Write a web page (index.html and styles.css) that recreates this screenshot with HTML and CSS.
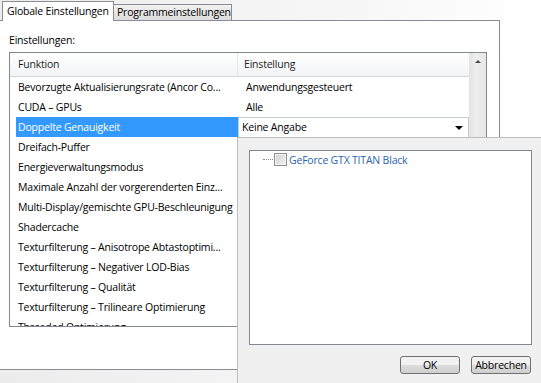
FILE: index.html
```html
<!DOCTYPE html>
<html lang="de">
<head>
    <meta charset="UTF-8">
    <title>Globale Einstellungen</title>
    <link rel="stylesheet" href="styles.css">
</head>
<body>
    <div class="dialog">
        <!-- Reiter oben -->
        <div class="tabs">
            <div class="tab aktiv">Globale Einstellungen</div>
            <div class="tab">Programmeinstellungen</div>
        </div>

        <div class="seite">
            <div class="beschriftung">Einstellungen:</div>
            <div class="liste">
                <div class="inhalt">
                    <div class="kopf">
                        <div class="k-funktion">Funktion</div>
                        <div class="k-wert">Einstellung</div>
                    </div>
                    <div class="zeile"><div class="fn">Bevorzugte Aktualisierungsrate (Ancor Co...</div><div class="wert">Anwendungsgesteuert</div></div>
                    <div class="zeile"><div class="fn">CUDA – GPUs</div><div class="wert">Alle</div></div>
                    <div class="zeile gewaehlt">
                        <div class="fn">Doppelte Genauigkeit</div>
                        <div class="wert combo">Keine Angabe<span class="pfeil"></span></div>
                    </div>
                    <div class="zeile"><div class="fn">Dreifach-Puffer</div><div class="wert"></div></div>
                    <div class="zeile"><div class="fn">Energieverwaltungsmodus</div><div class="wert"></div></div>
                    <div class="zeile"><div class="fn">Maximale Anzahl der vorgerenderten Einz...</div><div class="wert"></div></div>
                    <div class="zeile"><div class="fn">Multi-Display/gemischte GPU-Beschleunigung</div><div class="wert"></div></div>
                    <div class="zeile"><div class="fn">Shadercache</div><div class="wert"></div></div>
                    <div class="zeile"><div class="fn">Texturfilterung – Anisotrope Abtastoptimi...</div><div class="wert"></div></div>
                    <div class="zeile"><div class="fn">Texturfilterung – Negativer LOD-Bias</div><div class="wert"></div></div>
                    <div class="zeile"><div class="fn">Texturfilterung – Qualität</div><div class="wert"></div></div>
                    <div class="zeile"><div class="fn">Texturfilterung – Trilineare Optimierung</div><div class="wert"></div></div>
                    <div class="zeile"><div class="fn">Threaded Optimierung</div><div class="wert"></div></div>
                </div>
                <div class="rollbalken">
                    <div class="hoch"><span class="dreieck"></span></div>
                </div>
            </div>
        </div>

        <!-- aufgeklappte Auswahl über der Liste -->
        <div class="auswahl">
            <div class="baum">
                <div class="knoten">
                    <span class="linie"></span>
                    <span class="haken"></span>
                    <span class="gpu">GeForce GTX TITAN Black</span>
                </div>
            </div>
            <div class="knoepfe">
                <button class="knopf">OK</button>
                <button class="knopf">Abbrechen</button>
            </div>
        </div>
    </div>
</body>
</html>
```

FILE: styles.css
```css
*{
    margin: 0;
    padding: 0;
    box-sizing: border-box;
}
body{
    font-family: "Open Sans", "Noto Sans", sans-serif;
    font-size: 10.5px;
    letter-spacing: -0.2px;
    color: #000;
    background: #f0f0f0;
}
.dialog{
    position: relative;
    width: 541px;
    height: 383px;
    overflow: hidden;
    background: linear-gradient(to right, #ececec, #f6f6f6 60%, #ffffff);
}

/* Reiter */
.tabs{
    display: flex;
    align-items: flex-end;
    height: 20px;
    padding-left: 2px;
}
.tab{
    width: 119px;
    height: 16px;
    line-height: 15px;
    padding-left: 3px;
    margin-left: -1px;
    border: 1px solid #898c95;
    border-bottom: none;
    background: linear-gradient(#f2f2f2, #dcdcdc);
    position: relative;
    z-index: 1;
}
.tab.aktiv{
    width: 112px;
    height: 20px;
    line-height: 18px;
    margin-left: 0;
    margin-bottom: -1px;
    padding-left: 4px;
    background: #fff;
    z-index: 2;
}

/* Registerseite */
.seite{
    width: 501px;
    height: 350px;
    margin-left: -1px;
    border: 1px solid #898c95;
    background: #fff;
}
.beschriftung{
    padding: 12px 0 0 9px;
    line-height: 15px;
}
.liste{
    display: flex;
    width: 478px;
    height: 275px;
    margin: 4px 0 0 9px;
    border: 1px solid #828790;
    overflow: hidden;
}
.inhalt{
    flex: 1;
}
.kopf{
    display: flex;
    height: 24px;
    line-height: 23px;
    border-bottom: 1px solid #d5d5d5;
    background: linear-gradient(#ffffff, #f3f4f6);
    color: #1e1e1e;
}
.k-funktion{
    width: 228px;
    padding-left: 8px;
    border-right: 1px solid #e3e5e8;
}
.k-wert{
    padding-left: 6px;
}
.zeile{
    display: flex;
    height: 20px;
    line-height: 20px;
}
.fn{
    width: 222px;
    margin-left: 6px;
    padding-left: 2px;
    white-space: nowrap;
    overflow: hidden;
}
.wert{
    flex: 1;
    padding-left: 8px;
}
.gewaehlt .fn{
    background: #3399ff;
    color: #fff;
}
.combo{
    position: relative;
    padding-left: 3px;
    line-height: 18px;
    border: 1px solid #c5cad3;
    border-bottom: none;
    background: #fff;
}
.pfeil{
    position: absolute;
    right: 5px;
    top: 8px;
    border-left: 4px solid transparent;
    border-right: 4px solid transparent;
    border-top: 4px solid #000;
}

/* Rollbalken */
.rollbalken{
    width: 17px;
    background: linear-gradient(to right, #e3e3e3, #eeeeee 40%, #e6e6e6);
}
.hoch{
    height: 17px;
    display: flex;
    justify-content: center;
    padding-top: 7px;
}
.dreieck{
    width: 0;
    height: 0;
    border-left: 3px solid transparent;
    border-right: 3px solid transparent;
    border-bottom: 3px solid #4d4d4d;
}

/* Auswahlfenster */
.auswahl{
    position: absolute;
    left: 237px;
    top: 137px;
    right: -6px;
    bottom: -6px;
    border: 1px solid #bdbdbd;
    background: #f0f0f0;
}
.baum{
    width: 283px;
    height: 195px;
    margin: 12px 0 0 11px;
    border: 1px solid #828790;
    background: #fff;
}
.knoten{
    display: flex;
    align-items: center;
    height: 15px;
    margin-top: 1px;
    padding-left: 13px;
}
.linie{
    width: 10px;
    margin-right: 1px;
    border-top: 1px dotted #8a8a8a;
}
.haken{
    width: 13px;
    height: 13px;
    border: 1px solid #8e8f8f;
    background: linear-gradient(135deg, #d0d0d0, #f4f4f4);
    box-shadow: inset 0 0 0 1px #f4f4f4;
}
.gpu{
    margin-left: 2px;
    color: #2a64ad;
}
.knoepfe{
    display: flex;
    gap: 11px;
    padding: 11px 0 0 162px;
}
.knopf{
    width: 60px;
    height: 18px;
    font-family: inherit;
    font-size: 10.5px;
    letter-spacing: -0.2px;
    color: #000;
    border: 1px solid #707070;
    border-radius: 3px;
    background: linear-gradient(#f2f2f2 50%, #dddddd 50%, #cfcfcf);
}
```
